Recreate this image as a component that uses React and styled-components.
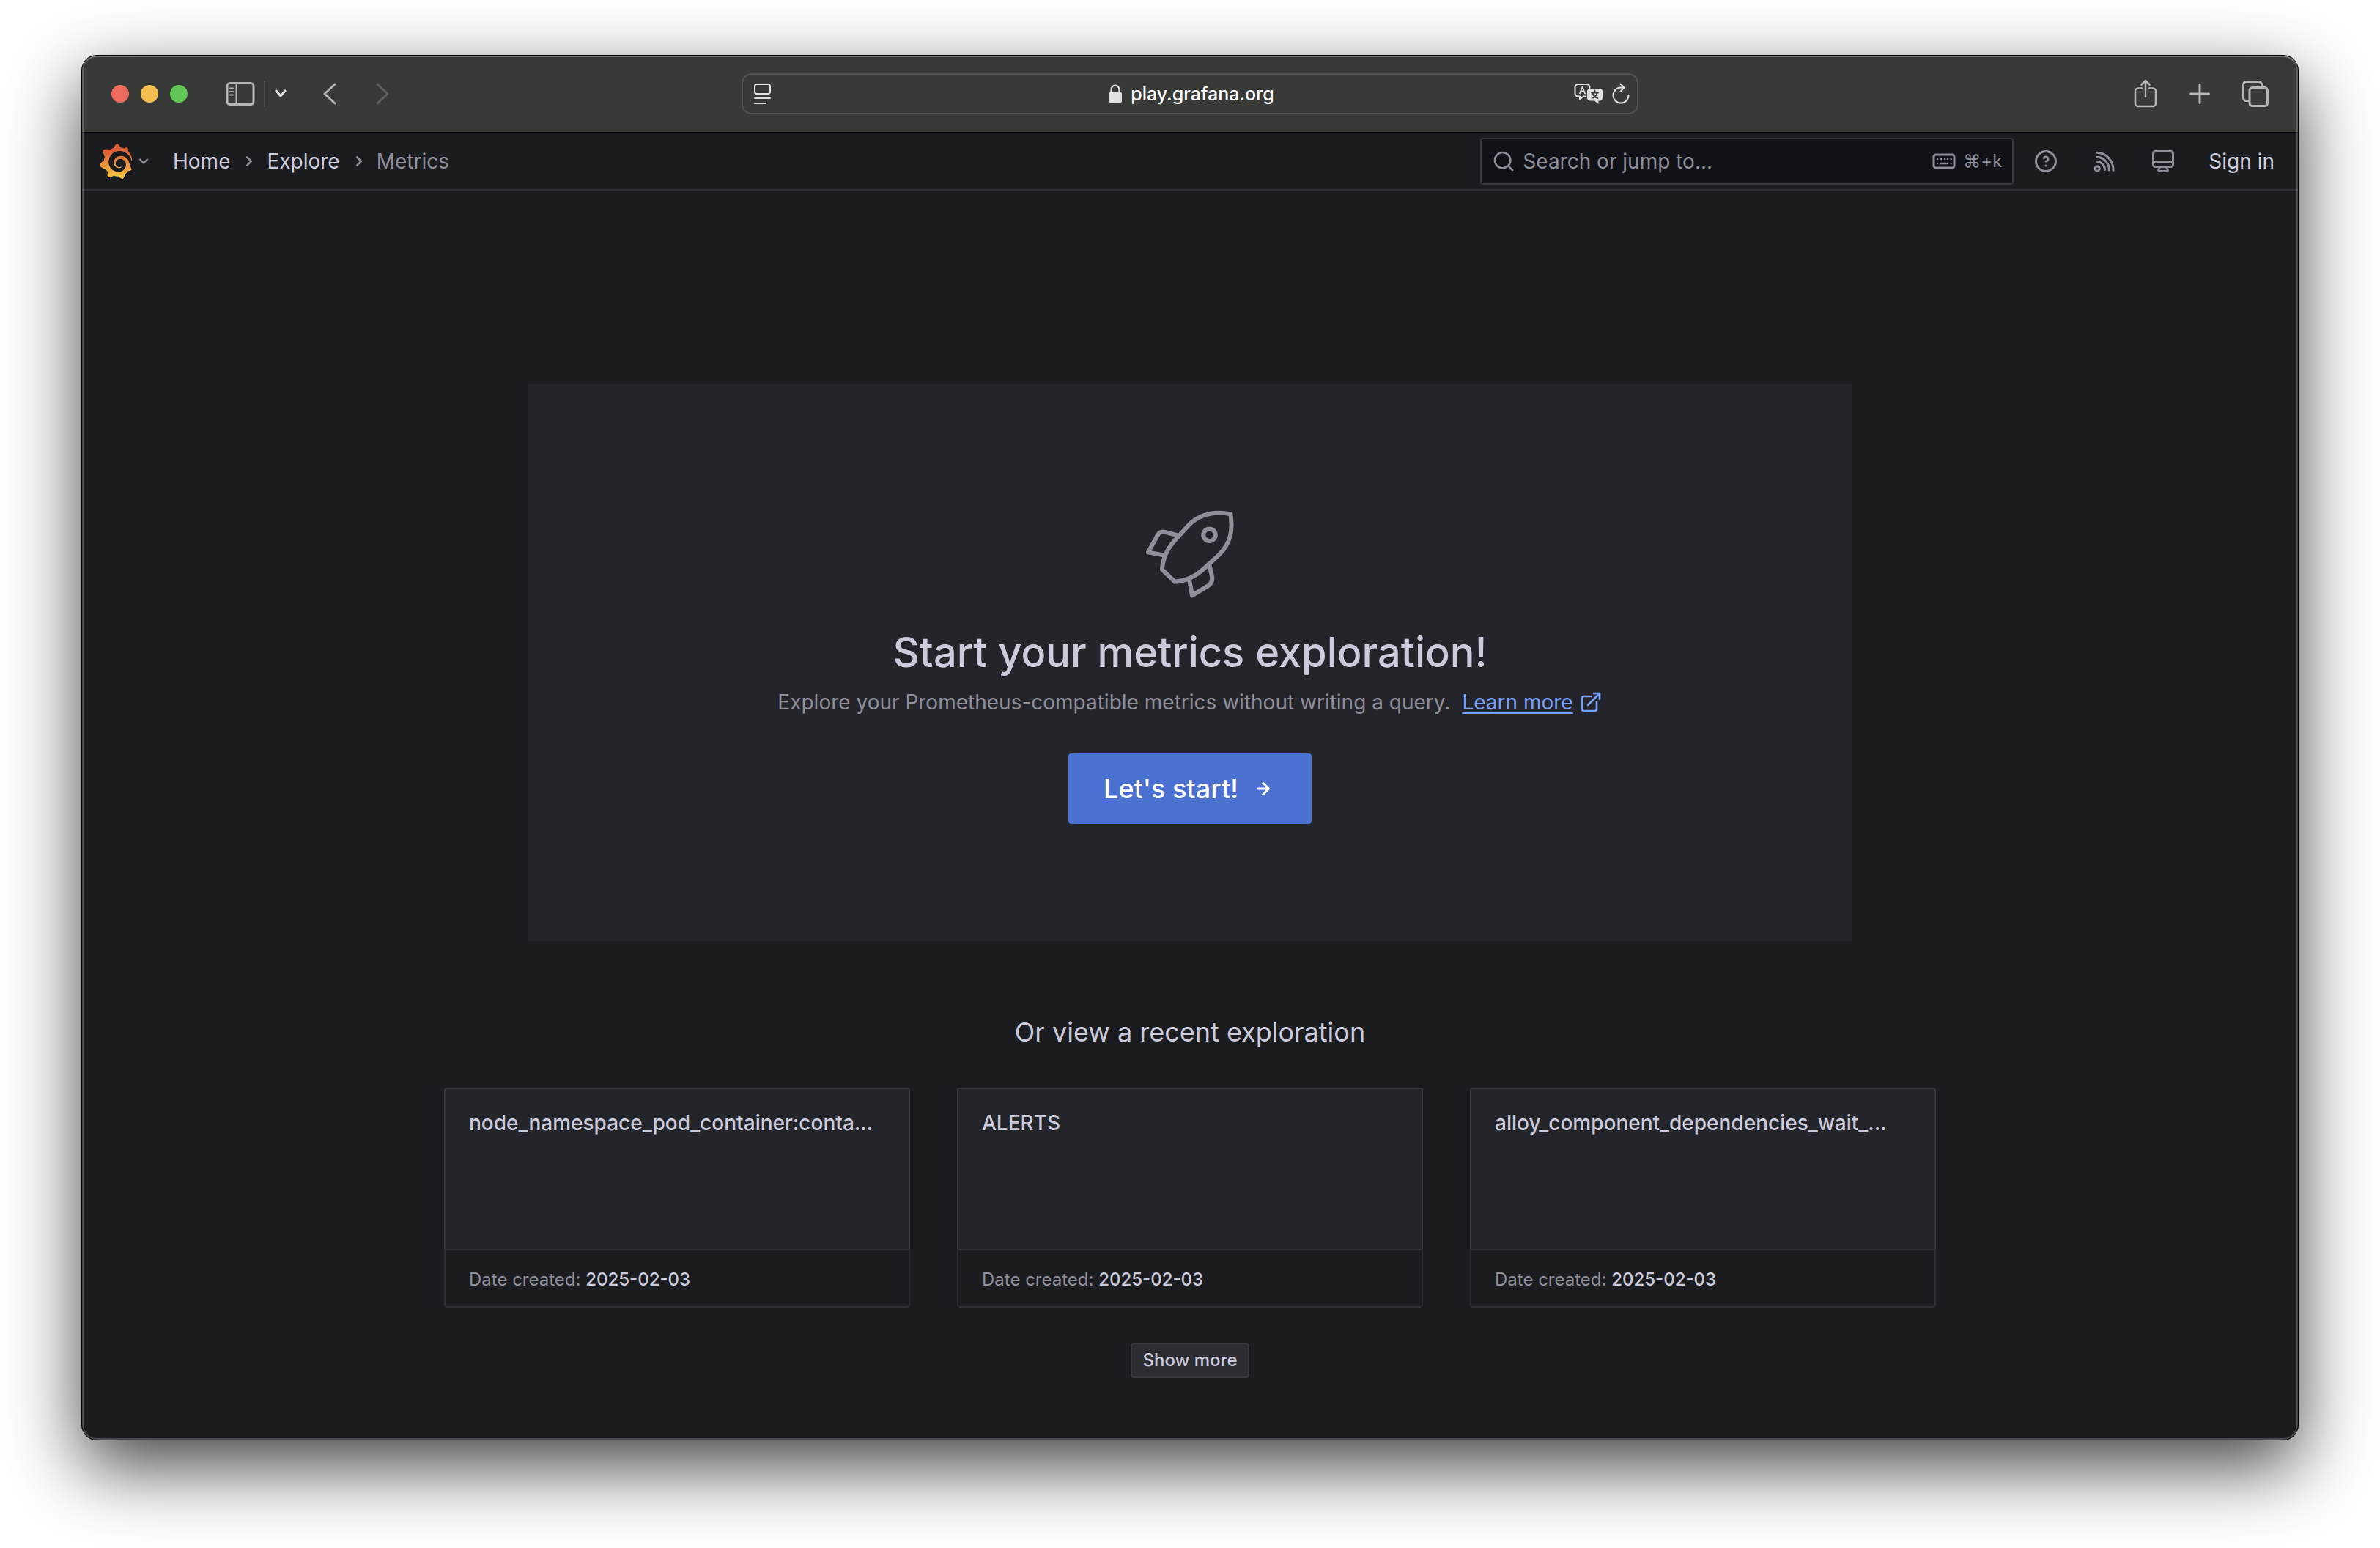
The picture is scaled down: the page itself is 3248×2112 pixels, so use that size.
import React from "react";
import styled, { createGlobalStyle } from "styled-components";
import { SiGrafana } from "react-icons/si";

const c = {
  page: "#1b1c20",
  panel: "#24252b",
  field: "#111217",
  line: "#2f3035",
  lineStrong: "#37383f",
  text: "#cccbdb",
  muted: "#8f8e99",
  link: "#769ff8",
  primary: "#4a70d2",
  chrome: "#383a38",
  chromeLine: "#505250",
  chromeIcon: "#b4b6b4",
  chromeBright: "#e0e1e0",
};

const GlobalStyle = createGlobalStyle`
  *, *::before, *::after { box-sizing: border-box; }
  body {
    margin: 0;
    background: #ffffff;
    color: ${c.text};
    font-family: Inter, "Liberation Sans", sans-serif;
    font-size: 28px;
    line-height: 44px;
  }
  h1, h2, h3, p { margin: 0; }
  button { font: inherit; color: inherit; background: none; border: 0; padding: 0; cursor: pointer; }
  a { color: inherit; text-decoration: none; }
  svg { display: block; flex: none; }
`;

const Desktop = styled.div`
  display: flex;
  min-height: 100vh;
  padding: 76px 112px 148px;
`;

const Window = styled.div`
  position: relative;
  flex: 1;
  min-width: 0;
  display: flex;
  flex-direction: column;
  border-radius: 20px;
  overflow: hidden;
  background: ${c.page};
  box-shadow: 0 0 0 1px #000000, 0 36px 100px rgba(0, 0, 0, 0.75);

  &::after {
    content: "";
    position: absolute;
    inset: 0;
    border: 2px solid rgba(255, 255, 255, 0.2);
    border-top-color: rgba(255, 255, 255, 0.3);
    border-radius: 20px;
    pointer-events: none;
  }
`;

const Chrome = styled.header`
  display: grid;
  grid-template-columns: 1fr minmax(0, 1224px) 1fr;
  align-items: center;
  height: 104px;
  padding: 0 40px;
  background: ${c.chrome};
  color: ${c.chromeIcon};
`;

const ChromeGroup = styled.div`
  display: flex;
  align-items: center;
  justify-content: ${(p) => (p.$end ? "flex-end" : "flex-start")};
`;

const TrafficLights = styled.div`
  display: flex;
  gap: 16px;
  margin-right: 52px;
`;

const Light = styled.button`
  width: 24px;
  height: 24px;
  border-radius: 50%;
  background: ${(p) => p.$color};
`;

const ChromeButton = styled.button`
  display: flex;
  align-items: center;
  justify-content: center;
  width: ${(p) => p.$width}px;
  height: 56px;
  color: ${(p) => p.$color || c.chromeIcon};
`;

const ChromeDivider = styled.span`
  width: 2px;
  height: 36px;
  margin: 0 12px;
  background: ${c.chromeLine};
`;

const AddressBar = styled.div`
  display: grid;
  grid-template-columns: 1fr auto 1fr;
  align-items: center;
  height: 56px;
  padding: 0 10px 0 14px;
  border: 2px solid ${c.chromeLine};
  border-radius: 14px;
  color: ${c.chromeBright};
`;

const Address = styled.div`
  display: flex;
  align-items: center;
  gap: 12px;
  color: #ffffff;
  font-size: 25px;
  line-height: 32px;
  font-weight: 500;
`;

const AddressActions = styled.div`
  display: flex;
  justify-content: flex-end;
  gap: 12px;
`;

const NavBar = styled.nav`
  display: flex;
  align-items: center;
  justify-content: space-between;
  height: 80px;
  padding: 0 32px 0 22px;
  border-top: 1px solid #000000;
  border-bottom: 2px solid ${c.line};
`;

const NavGroup = styled.div`
  display: flex;
  align-items: center;
`;

const LogoButton = styled.button`
  display: flex;
  align-items: center;
  margin-right: 26px;
  color: ${c.muted};
`;

const Crumbs = styled.ol`
  display: flex;
  align-items: center;
  gap: 8px;
  margin: 0;
  padding: 0;
  list-style: none;
`;

const Crumb = styled.li`
  display: flex;
  align-items: center;
  gap: 10px;
  color: ${(p) => (p.$current ? c.muted : c.text)};

  svg { color: ${c.muted}; }
`;

const SearchField = styled.label`
  display: flex;
  align-items: center;
  width: 728px;
  height: 64px;
  padding: 0 14px;
  border: 2px solid ${c.lineStrong};
  border-radius: 4px;
  background: ${c.field};
  color: ${c.muted};
`;

const SearchInput = styled.input`
  flex: 1;
  min-width: 0;
  margin-left: 10px;
  padding: 0;
  border: 0;
  outline: 0;
  background: transparent;
  color: ${c.text};
  font: inherit;

  &::placeholder { color: ${c.muted}; opacity: 1; }
`;

const Shortcut = styled.kbd`
  display: flex;
  align-items: center;
  gap: 10px;
  font-family: inherit;
  font-size: 24px;
`;

const NavIcons = styled.div`
  display: flex;
  align-items: center;
  gap: 44px;
  margin: 0 44px 0 26px;
  color: ${c.muted};
`;

const Main = styled.main`
  display: flex;
  flex-direction: column;
  align-items: center;
  padding: 264px 64px 84px;
`;

const Hero = styled.section`
  display: flex;
  flex-direction: column;
  align-items: center;
  width: 100%;
  max-width: 1808px;
  padding: 172px 64px 160px;
  background: ${c.panel};
`;

const HeroTitle = styled.h1`
  margin-top: 40px;
  font-size: 56px;
  line-height: 68px;
  font-weight: 500;
`;

const HeroText = styled.p`
  display: flex;
  align-items: center;
  gap: 16px;
  margin-top: 12px;
  color: ${c.muted};
`;

const LearnMore = styled.a`
  display: flex;
  align-items: center;
  gap: 8px;
  color: ${c.link};

  span {
    text-decoration: underline;
    text-decoration-thickness: 2px;
    text-underline-offset: 4px;
  }
`;

const StartButton = styled.button`
  display: flex;
  align-items: center;
  gap: 16px;
  height: 96px;
  margin-top: 48px;
  padding: 0 48px;
  border-radius: 4px;
  background: ${c.primary};
  color: #ffffff;
  font-size: 36px;
  font-weight: 500;
`;

const RecentTitle = styled.h2`
  margin-top: 100px;
  font-size: 36px;
  line-height: 48px;
  font-weight: 400;
`;

const CardGrid = styled.div`
  display: grid;
  grid-template-columns: repeat(3, minmax(0, 1fr));
  gap: 64px;
  width: 100%;
  max-width: 2036px;
  margin-top: 52px;
`;

const Card = styled.article`
  display: flex;
  flex-direction: column;
  min-height: 300px;
  border-radius: 4px;
`;

const CardBody = styled.div`
  flex: 1;
  padding: 24px 32px;
  border: 2px solid ${c.lineStrong};
  border-bottom: 0;
  border-radius: 4px 4px 0 0;
  background: ${c.panel};
`;

const CardTitle = styled.h3`
  overflow: hidden;
  font-size: 28px;
  line-height: 44px;
  font-weight: 500;
  text-overflow: ellipsis;
  white-space: nowrap;
`;

const CardFooter = styled.div`
  padding: 18px 32px 14px;
  border: 2px solid ${c.line};
  border-radius: 0 0 4px 4px;
  color: ${c.muted};
  font-size: 24px;

  time { color: ${c.text}; font-weight: 500; }
`;

const ShowMore = styled.button`
  height: 48px;
  margin-top: 48px;
  padding: 0 14px;
  border: 2px solid ${c.lineStrong};
  border-radius: 4px;
  background: #2c2d33;
  color: ${c.text};
  font-size: 24px;
  line-height: 44px;
  font-weight: 500;
`;

const UNI = {
  angleDown:
    "M17,9.17a1,1,0,0,0-1.41,0L12,12.71,8.46,9.17a1,1,0,0,0-1.41,0,1,1,0,0,0,0,1.42l4.24,4.24a1,1,0,0,0,1.42,0L17,10.59A1,1,0,0,0,17,9.17Z",
  angleRight:
    "M14.83,11.29,10.59,7.05a1,1,0,0,0-1.42,0,1,1,0,0,0,0,1.41L12.71,12,9.17,15.54a1,1,0,0,0,0,1.41,1,1,0,0,0,.71.29,1,1,0,0,0,.71-.29l4.24-4.24A1,1,0,0,0,14.83,11.29Z",
  search:
    "M21.71,20.29,18,16.61A9,9,0,1,0,16.61,18l3.68,3.68a1,1,0,0,0,1.42,0A1,1,0,0,0,21.71,20.29ZM11,18a7,7,0,1,1,7-7A7,7,0,0,1,11,18Z",
  help:
    "M11.29,15.29a1.58,1.58,0,0,0-.12.15.76.76,0,0,0-.09.18.64.64,0,0,0-.06.18,1.36,1.36,0,0,0,0,.2.84.84,0,0,0,.08.38.9.9,0,0,0,.54.54.94.94,0,0,0,.76,0,.9.9,0,0,0,.54-.54A1,1,0,0,0,13,16a1,1,0,0,0-.29-.71A1,1,0,0,0,11.29,15.29ZM12,2A10,10,0,1,0,22,12,10,10,0,0,0,12,2Zm0,18a8,8,0,1,1,8-8A8,8,0,0,1,12,20ZM12,7A3,3,0,0,0,9.4,8.5a1,1,0,1,0,1.73,1A1,1,0,0,1,12,9a1,1,0,0,1,0,2,1,1,0,1,0,0,2,3,3,0,0,0,0-6Z",
  desktop:
    "M19,2H5A3,3,0,0,0,2,5V15a3,3,0,0,0,3,3H7.64l-.58,1a2,2,0,0,0,0,2,2,2,0,0,0,1.75,1h6.46A2,2,0,0,0,17,21a2,2,0,0,0,0-2l-.59-1H19a3,3,0,0,0,3-3V5A3,3,0,0,0,19,2ZM8.77,20,10,18H14l1.2,2ZM20,15a1,1,0,0,1-1,1H5a1,1,0,0,1-1-1V14H20Zm0-3H4V5A1,1,0,0,1,5,4H19a1,1,0,0,1,1,1Z",
  external:
    "M18,10.82a1,1,0,0,0-1,1V19a1,1,0,0,1-1,1H5a1,1,0,0,1-1-1V8A1,1,0,0,1,5,7h7.18a1,1,0,0,0,0-2H5A3,3,0,0,0,2,8V19a3,3,0,0,0,3,3H16a3,3,0,0,0,3-3V11.82A1,1,0,0,0,18,10.82Zm3.92-8.2a1,1,0,0,0-.54-.54A1,1,0,0,0,21,2H15a1,1,0,0,0,0,2h3.59L8.29,14.29a1,1,0,0,0,0,1.42,1,1,0,0,0,1.42,0L20,5.41V9a1,1,0,0,0,2,0V3A1,1,0,0,0,21.92,2.62Z",
  arrowRight:
    "M17.92,11.62a1,1,0,0,0-.21-.33l-5-5a1,1,0,0,0-1.42,1.42L14.59,11H7a1,1,0,0,0,0,2h7.59l-3.3,3.29a1,1,0,0,0,0,1.42,1,1,0,0,0,1.42,0l5-5a1,1,0,0,0,.21-.33A1,1,0,0,0,17.92,11.62Z",
};

const Icon = ({ name, size }) => (
  <svg width={size} height={size} viewBox="0 0 24 24" fill="currentColor" aria-hidden="true">
    <path d={UNI[name]} />
  </svg>
);

const Line = ({ w, h, stroke = 3, children }) => (
  <svg
    width={w}
    height={h}
    viewBox={`0 0 ${w} ${h}`}
    fill="none"
    stroke="currentColor"
    strokeWidth={stroke}
    strokeLinecap="round"
    strokeLinejoin="round"
    aria-hidden="true"
  >
    {children}
  </svg>
);

const SidebarIcon = () => (
  <Line w={40} h={32} stroke={3}>
    <rect x="2" y="1.500" width="36" height="29" rx="4" />
    <path d="M14.500 2v28" strokeWidth="2" />
    <path d="M6 8.500h4M6 13h4M6 17.500h4" strokeWidth="2" />
  </Line>
);

const ReaderIcon = () => (
  <Line w={24} h={30} stroke={2}>
    <rect x="2" y="2" width="21" height="13" rx="3" />
    <path d="M2 21h21M2 28h15" />
  </Line>
);

const LockIcon = () => (
  <svg width="18" height="26" viewBox="0 0 18 26" fill="none" aria-hidden="true">
    <path d="M3.500 12V7.500a5.500 6 0 0 1 11 0V12" stroke={c.chromeBright} strokeWidth="2.200" />
    <rect x="0" y="10.500" width="18" height="15" rx="3" fill={c.chromeBright} />
  </svg>
);

const TranslateIcon = () => (
  <svg width="40" height="30" viewBox="0 0 40 30" fill="none" strokeLinecap="round" strokeLinejoin="round" aria-hidden="true">
    <path
      d="M16.500 18.500H13L8 22.500V18.500H5.500A4 4 0 0 1 1.500 14.500V6A4 4 0 0 1 5.500 2H17.500A4 4 0 0 1 21.500 6V7"
      stroke="currentColor"
      strokeWidth="2"
    />
    <path d="M8 14.500L11.500 5.500L15 14.500M9.200 11.500H13.800" stroke="currentColor" strokeWidth="1.800" />
    <path
      d="M22 8H35A4 4 0 0 1 39 12V20.500A4 4 0 0 1 35 24.500H33.500V29L28 24.500H22A4 4 0 0 1 18 20.500V12A4 4 0 0 1 22 8Z"
      fill="currentColor"
    />
    <path d="M28.500 10.500V13M24 13.500H33M31.500 13.500C31 17 28 20 24.500 21M25.500 13.500C26 17 29 20 32.500 21" stroke={c.chrome} strokeWidth="1.800" />
  </svg>
);

const ReloadIcon = () => (
  <Line w={24} h={30} stroke={2}>
    <path d="M15 6.500H12A10.500 10.500 0 1 0 22.500 17" />
    <path d="M11.500 1.500L16.500 6.500L11.500 12" />
  </Line>
);

const ShareIcon = () => (
  <Line w={32} h={40} stroke={2}>
    <path d="M11 12.500H6A4 4 0 0 0 2 16.500V33A4 4 0 0 0 6 37H26A4 4 0 0 0 30 33V16.500A4 4 0 0 0 26 12.500H21" strokeWidth="2.500" />
    <path d="M16 24V2M10.500 7.500L16 2L21.500 7.500" strokeWidth="2.500" />
  </Line>
);

const PlusIcon = () => (
  <Line w={28} h={28} stroke={3}>
    <path d="M14 1.500V26.500M1.500 14H26.500" />
  </Line>
);

const TabsIcon = () => (
  <Line w={36} h={36} stroke={3}>
    <rect x="10" y="9.500" width="24.500" height="25" rx="4" />
    <path d="M9 27.500H5.500A4 4 0 0 1 1.500 23.500V5.500A4 4 0 0 1 5.500 1.500H22.500A4 4 0 0 1 26.500 5.500V8.500" />
  </Line>
);

const KeyboardIcon = () => (
  <Line w={32} h={22} stroke={3}>
    <rect x="2" y="2" width="28" height="18" rx="3" />
    <path d="M7 8h.1M12 8h.1M17 8h.1M21 8h.1M25.500 8h.1M7 14h.1M12 14h8M25.500 14h.1" strokeWidth="2.500" />
  </Line>
);

const NewsIcon = () => (
  <svg width="36" height="36" viewBox="0 0 24 24" fill="none" stroke="currentColor" strokeWidth="2" strokeLinecap="round" aria-hidden="true">
    <circle cx="5.500" cy="18.700" r="2.100" />
    <path d="M5.500 4.200A15.500 15.500 0 0 1 20 20.300M5.500 8.200A11.500 11.500 0 0 1 16.200 20M5.500 12.200A7.500 7.500 0 0 1 12.300 19.600" />
  </svg>
);

const Rocket = () => (
  <svg width="120" height="120" viewBox="193 106 362 360" fill="none" stroke={c.muted} strokeWidth="18" strokeLinejoin="round" aria-hidden="true">
    <path d="M541 121C470 108 412 124 370 165L318 222C280 262 262 302 259 349L312 400C360 396 396 378 430 347L492 290C545 240 550 182 541 121Z" />
    <circle cx="454" cy="207" r="25" />
    <path d="M330 210L271 195Q252 191 243 204L202 278L268 291" />
    <path d="M453 328L465 380Q468 404 448 417L383 456L371 392" />
  </svg>
);

const Logo = () => (
  <>
    <svg width="0" height="0" aria-hidden="true">
      <defs>
        <linearGradient id="grafana-flame" x1="0" y1="1" x2="0" y2="0">
          <stop offset="0" stopColor="#f3cb3e" />
          <stop offset="0.350" stopColor="#ec9a41" />
          <stop offset="0.750" stopColor="#df6334" />
          <stop offset="1" stopColor="#dd5a38" />
        </linearGradient>
      </defs>
    </svg>
    <SiGrafana size={48} fill="url(#grafana-flame)" aria-hidden="true" />
  </>
);

const explorations = [
  { metric: "node_namespace_pod_container:conta...", date: "2025-02-03" },
  { metric: "ALERTS", date: "2025-02-03" },
  { metric: "alloy_component_dependencies_wait_...", date: "2025-02-03" },
];

const BrowserChrome = () => (
  <Chrome>
    <ChromeGroup>
      <TrafficLights>
        <Light $color="#ed6a5e" aria-label="Close" />
        <Light $color="#f5bf4f" aria-label="Minimise" />
        <Light $color="#62c655" aria-label="Zoom" />
      </TrafficLights>
      <ChromeButton $width={40} aria-label="Sidebar"><SidebarIcon /></ChromeButton>
      <ChromeDivider />
      <ChromeButton $width={18} $color={c.chromeBright} aria-label="Tab groups">
        <Line w={18} h={12} stroke={3}><path d="M3 2L9 9L15 2" /></Line>
      </ChromeButton>
      <ChromeButton $width={116} aria-label="Back">
        <Line w={20} h={32} stroke={3}><path d="M17 3L3 16L17 29" /></Line>
      </ChromeButton>
      <ChromeButton $width={28} $color="#5e605e" aria-label="Forward">
        <Line w={20} h={32} stroke={3}><path d="M3 3L17 16L3 29" /></Line>
      </ChromeButton>
    </ChromeGroup>
    <AddressBar>
      <ReaderIcon />
      <Address>
        <LockIcon />
        <span>play.grafana.org</span>
      </Address>
      <AddressActions>
        <TranslateIcon />
        <ReloadIcon />
      </AddressActions>
    </AddressBar>
    <ChromeGroup $end>
      <ChromeButton $width={32} aria-label="Share"><ShareIcon /></ChromeButton>
      <ChromeButton $width={116} aria-label="New tab"><PlusIcon /></ChromeButton>
      <ChromeButton $width={36} aria-label="Tab overview"><TabsIcon /></ChromeButton>
    </ChromeGroup>
  </Chrome>
);

const Navigation = () => (
  <NavBar>
    <NavGroup>
      <LogoButton aria-label="Open menu">
        <Logo />
        <Icon name="angleDown" size={28} />
      </LogoButton>
      <Crumbs>
        <Crumb><a href="#home">Home</a><Icon name="angleRight" size={32} /></Crumb>
        <Crumb><a href="#explore">Explore</a><Icon name="angleRight" size={32} /></Crumb>
        <Crumb $current>Metrics</Crumb>
      </Crumbs>
    </NavGroup>
    <NavGroup>
      <SearchField>
        <Icon name="search" size={32} />
        <SearchInput type="text" placeholder="Search or jump to..." aria-label="Search or jump to" />
        <Shortcut>
          <KeyboardIcon />
          <span>⌘+k</span>
        </Shortcut>
      </SearchField>
      <NavIcons>
        <button aria-label="Help"><Icon name="help" size={36} /></button>
        <button aria-label="News"><NewsIcon /></button>
        <button aria-label="Kiosk mode"><Icon name="desktop" size={36} /></button>
      </NavIcons>
      <a href="#login">Sign in</a>
    </NavGroup>
  </NavBar>
);

export default function App() {
  return (
    <>
      <GlobalStyle />
      <Desktop>
        <Window>
          <BrowserChrome />
          <Navigation />
          <Main>
            <Hero>
              <Rocket />
              <HeroTitle>Start your metrics exploration!</HeroTitle>
              <HeroText>
                Explore your Prometheus-compatible metrics without writing a query.
                <LearnMore href="#docs">
                  <span>Learn more</span>
                  <Icon name="external" size={32} />
                </LearnMore>
              </HeroText>
              <StartButton>
                Let's start!
                <Icon name="arrowRight" size={36} />
              </StartButton>
            </Hero>
            <RecentTitle>Or view a recent exploration</RecentTitle>
            <CardGrid>
              {explorations.map((e) => (
                <Card key={e.metric}>
                  <CardBody>
                    <CardTitle>{e.metric}</CardTitle>
                  </CardBody>
                  <CardFooter>
                    Date created: <time dateTime={e.date}>{e.date}</time>
                  </CardFooter>
                </Card>
              ))}
            </CardGrid>
            <ShowMore>Show more</ShowMore>
          </Main>
        </Window>
      </Desktop>
    </>
  );
}
